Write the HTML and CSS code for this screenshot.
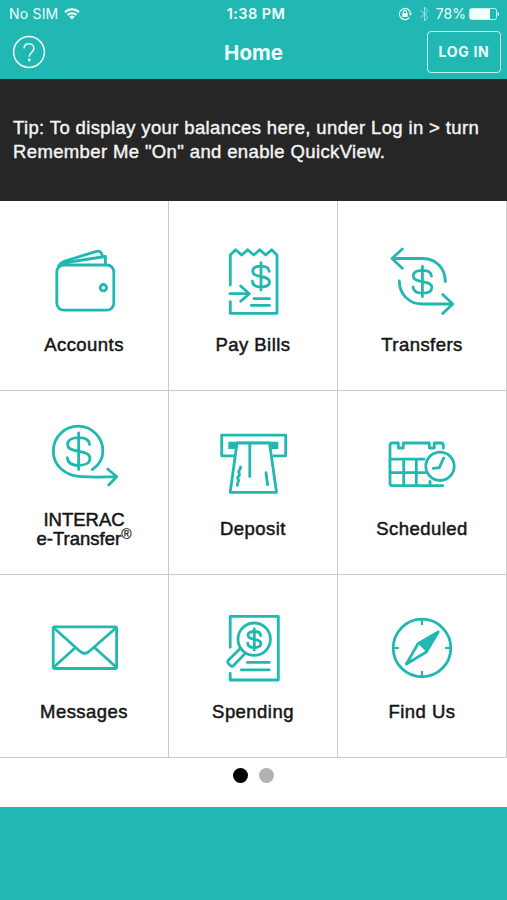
FILE: index.html
```html
<!DOCTYPE html>
<html lang="en">
<head>
    <meta charset="UTF-8">
    <meta name="viewport" content="width=device-width, initial-scale=1.0">
    <title>Home</title>
    <link rel="stylesheet" href="styles.css">
</head>
<body>
    <!-- shared dollar sign -->
    <svg class="defs" width="0" height="0">
        <symbol id="dollar" viewBox="-14 -16 28 32" overflow="visible">
            <path d="M0-13.7V13.7M8.2-5C8-8.5 5-10.2 0-10.2S-8.3-8.3-8.3-5.2S-6-1 0 .1S8.5 2.3 8.5 5.4S5.5 10.6 0 10.6S-8.3 8.6-8.5 4.8"/>
        </symbol>
    </svg>

    <div class="app">
        <header class="header">
            <div class="status-bar">
                <div class="status-left">
                    <span>No SIM</span>
                    <svg class="wifi" width="16" height="12" viewBox="0 0 16 12">
                        <path d="M1 4.2a10 10 0 0 1 14 0M3.5 7a6.4 6.4 0 0 1 9 0"/>
                        <path class="solid" d="M8 11.6L5.2 8.8a4 4 0 0 1 5.6 0z"/>
                    </svg>
                </div>
                <div class="status-time">1:38 PM</div>
                <div class="status-right">
                    <svg class="lock" width="14" height="14" viewBox="0 0 14 14">
                        <path d="M11.3 10.6A5.6 5.6 0 1 1 12.6 7"/>
                        <path class="solid" d="M10.8 6.5h3.2l-1.6 2.3zM4.3 6.2h5.4v3.9H4.3z"/>
                        <path d="M5.4 6.4V5a1.6 1.6 0 0 1 3.2 0v1.4"/>
                    </svg>
                    <svg class="bluetooth" width="9" height="16" viewBox="0 0 9 16">
                        <path d="M.7 4.3L8 11.3L4.5 15V1L8 4.7L.7 11.7"/>
                    </svg>
                    <span>78%</span>
                    <svg class="battery" width="31" height="12" viewBox="0 0 31 12">
                        <rect x=".5" y=".5" width="27" height="11" rx="2"/>
                        <path class="solid" d="M1 1h20v10H1zM28.6 4c2 .6 2 3.4 0 4z"/>
                    </svg>
                </div>
            </div>
            <div class="nav">
                <button class="help-btn">
                    <svg width="34" height="34" viewBox="0 0 34 34">
                        <circle cx="17" cy="17" r="15.4"/>
                        <path d="M12.1 13.6c0-3 2.1-4.8 4.9-4.8s4.9 1.8 4.9 4.4c0 3.9-4.6 4.3-4.6 8.6"/>
                        <circle class="dot" cx="17.3" cy="25" r="1.4"/>
                    </svg>
                </button>
                <h1>Home</h1>
                <button class="login-btn">LOG IN</button>
            </div>
        </header>

        <section class="tip">
            <p>Tip: To display your balances here, under Log in &gt; turn<br>Remember Me "On" and enable QuickView.</p>
        </section>

        <main class="grid">
            <a class="tile">
                <svg class="icon" viewBox="0 0 80 80">
                    <rect x="12.8" y="24" width="57" height="45.2" rx="7"/>
                    <path d="M14.5 25.5C15.5 22 18 21 21 20L52.5 10.4Q57.3 9.2 58.3 15M16 24.5C22 21.5 27 20.8 32 20L61.4 15.5V24"/>
                    <circle cx="59.4" cy="46.7" r="3.2"/>
                </svg>
                <span class="label">Accounts</span>
            </a>
            <a class="tile">
                <svg class="icon" viewBox="0 0 80 80">
                    <path d="M17.3 44V14l5.3-5.2L28.7 14l6-5.2L40.7 14l6-5.2L52.7 14l6-5.2L64 14v58.3H17.3V60.7"/>
                    <path d="M17 52.7h19M27.7 45l8.6 7.7l-8.6 7.6M41 57.7h15.5M38.3 64.4h18.2"/>
                    <use href="#dollar" x="34" y="19.4" width="28" height="32"/>
                </svg>
                <span class="label">Pay Bills</span>
            </a>
            <a class="tile">
                <svg class="icon" viewBox="0 0 80 80">
                    <path d="M20.3 8L10 17.5l10.3 9.8M10.5 17.5H41C55 18 63.3 28 63.3 40.7"/>
                    <path d="M17.3 40C17.3 53 27 63 40 63h30.5M60.7 53.5L70.8 63l-10.1 9.6"/>
                    <use href="#dollar" x="25" y="22.9" width="30.8" height="35.2"/>
                </svg>
                <span class="label">Transfers</span>
            </a>
            <a class="tile tile-two-line">
                <svg class="icon" viewBox="0 0 80 80">
                    <path d="M48.3 49.5C55 45 58.9 38.5 58.9 31A24.8 24.8 0 1 0 9.3 31C9.3 46 21 55.5 37 56.7Q52 57.6 72.5 56.7M63.7 49l9 7.7l-8 8.3"/>
                    <use href="#dollar" x="16" y="9.9" width="37.3" height="42.6"/>
                </svg>
                <span class="label">INTERAC<br>e-Transfer<sup>®</sup></span>
            </a>
            <a class="tile tile-middle">
                <svg class="icon" viewBox="0 0 80 80">
                    <path d="M20 35.8H8.7V15.2h64v20.6H61"/>
                    <path class="solid" d="M15.3 21.7h50V29h-50z"/>
                    <path class="paper" d="M24 23h32.5l7 49.3H17.2z"/>
                    <path d="M36.8 24v32.5M53 52.7l1.6 12M27.5 47c.8 3-3 3-1.5 5.8s-.2 3-1.2 4.4s1.8 2.2.6 4.2s-1 2.4-1 4"/>
                </svg>
                <span class="label">Deposit</span>
            </a>
            <a class="tile tile-middle">
                <svg class="icon" viewBox="0 0 80 80">
                    <path d="M61.3 28.3V25.5Q61.3 23 58.8 23H52.3v5h-5v-5h-26v5h-5v-5H10.5Q8 23 8 25.5v37.7q0 2.5 2.5 2.5h50.2"/>
                    <path d="M8 39.2h34M8 52.6h35.3M21.7 39.2v26.5M34.3 39.2v26.5M48 61.5v4"/>
                    <circle cx="58" cy="46.3" r="14.2"/>
                    <path d="M61.7 38l-4.4 9.7l-6 .6"/>
                </svg>
                <span class="label">Scheduled</span>
            </a>
            <a class="tile tile-bottom">
                <svg class="icon" viewBox="0 0 80 80">
                    <rect x="9.2" y="20.8" width="63.4" height="41.7" rx="1.5"/>
                    <path d="M10.5 22.5l24.8 22.3q5.3 5.2 10.6 0L71.3 22.5M31 42L10.5 60.5M51 42l20.5 18.5"/>
                </svg>
                <span class="label">Messages</span>
            </a>
            <a class="tile tile-bottom">
                <svg class="icon" viewBox="0 0 80 80">
                    <path d="M17.2 41.3v-31h48.1V74H17.2v-6.7M34.3 56.4h22M28.3 63.8h28"/>
                    <circle cx="41.2" cy="33.2" r="16.2"/>
                    <path d="M27.2 42.6L15.4 54.2q-1.6 1.6 0 3.2l2 2q1.6 1.6 3.2 0L32 47.6"/>
                    <use href="#dollar" x="30.5" y="21" width="21.6" height="24.7"/>
                </svg>
                <span class="label">Spending</span>
            </a>
            <a class="tile tile-bottom">
                <svg class="icon" viewBox="0 0 80 80">
                    <circle cx="40" cy="42" r="28.8"/>
                    <path class="tick" d="M40 13v6M40 65v6M11 42h6M63 42h6"/>
                    <path class="needle" d="M56.2 26L36 37.6L24.4 58L44.3 46z"/>
                    <path class="solid" d="M56.2 26L36 37.6L44.3 46z"/>
                </svg>
                <span class="label">Find Us</span>
            </a>
        </main>

        <div class="pager">
            <span class="page-dot active"></span>
            <span class="page-dot"></span>
        </div>

        <footer class="footer"></footer>
    </div>
</body>
</html>
```

FILE: styles.css
```css
* {
    margin: 0;
    padding: 0;
    box-sizing: border-box;
}

body {
    font-family: "Liberation Sans", Arial, sans-serif;
    background: #fff;
    color: #161616;
}

.defs {
    position: absolute;
}

.app {
    display: flex;
    flex-direction: column;
    width: 507px;
    height: 900px;
    overflow: hidden;
}

/* Header */
.header {
    height: 79px;
    background: #21b8b3;
    color: #effffd;
    font-family: Inter, Roboto, sans-serif;
}

.status-bar {
    display: grid;
    grid-template-columns: 1fr auto 1fr;
    align-items: center;
    height: 27px;
    padding: 0 7px 0 9px;
    font-size: 14px;
}

.status-left,
.status-right {
    display: flex;
    align-items: center;
}

.status-left {
    gap: 6px;
    letter-spacing: 0.2px;
}

.status-right {
    justify-content: flex-end;
}

.status-time {
    padding-left: 3px;
    font-size: 14.5px;
    font-weight: 600;
    letter-spacing: 0.4px;
}

.header svg {
    fill: none;
    stroke: #effffd;
    stroke-width: 1.5;
}

.header svg .solid {
    fill: #effffd;
    stroke: none;
}

.header .wifi {
    stroke-width: 2;
}

.header .lock {
    margin-right: 8px;
    stroke-width: 1.1;
}

.header .bluetooth {
    margin-right: 7px;
    stroke-width: 1;
    opacity: 0.6;
}

.header .battery {
    margin-left: 3px;
    stroke-width: 0.8;
}

.nav {
    display: grid;
    grid-template-columns: 1fr auto 1fr;
    align-items: center;
    height: 50px;
    padding: 0 6px;
}

.nav h1 {
    font-size: 20.5px;
    font-weight: 700;
}

.nav button {
    background: none;
    border: none;
    color: inherit;
    font-family: inherit;
    cursor: pointer;
}

.help-btn {
    justify-self: start;
    height: 34px;
    margin-left: 6px;
}

.help-btn svg .dot {
    fill: #effffd;
    stroke: none;
}

.nav .login-btn {
    justify-self: end;
    width: 74px;
    height: 42px;
    padding-bottom: 1px;
    border: 1.5px solid #bff5f0;
    border-radius: 4px;
    font-size: 14px;
    font-weight: 700;
    letter-spacing: 0.7px;
}

/* Tip banner */
.tip {
    display: flex;
    align-items: center;
    height: 122px;
    padding: 0 13px;
    background: #262626;
    color: #f4f4f4;
    font-size: 18.5px;
    line-height: 24.5px;
    letter-spacing: 0.37px;
    -webkit-text-stroke: 0.4px #f4f4f4;
    white-space: nowrap;
}

/* Menu */
.grid {
    display: grid;
    grid-template-columns: repeat(3, 169px);
    grid-template-rows: 190px 184px 183px;
}

.tile {
    display: flex;
    flex-direction: column;
    align-items: center;
    justify-content: flex-end;
    padding-bottom: 34px;
    border-right: 1px solid #c9cacb;
    border-bottom: 1px solid #c9cacb;
}

.icon {
    width: 80px;
    height: 80px;
    margin-bottom: 13px;
    fill: none;
    stroke: #21b8b0;
    stroke-width: 2.8;
    stroke-linecap: round;
    stroke-linejoin: round;
}

.icon .solid {
    fill: #21b8b0;
    stroke: none;
}

.icon .paper {
    fill: #fff;
}

.icon .tick {
    stroke-linecap: butt;
    stroke-width: 2.2;
}

#dollar path {
    vector-effect: non-scaling-stroke;
}

.label {
    font-size: 18.5px;
    line-height: 22px;
    letter-spacing: 0.45px;
    text-align: center;
    -webkit-text-stroke: 0.5px #161616;
}

.tile-middle .icon {
    margin-bottom: 18px;
}

.tile-bottom .icon {
    margin-bottom: 15px;
}

.tile-two-line {
    padding-bottom: 26px;
}

.tile-two-line .icon {
    margin-bottom: 10px;
}

.tile-two-line .label {
    font-size: 18.5px;
    line-height: 19px;
    letter-spacing: 0;
}

.label sup {
    font-size: 14px;
    line-height: 0;
    vertical-align: 6px;
    -webkit-text-stroke: 0.2px #161616;
}

/* Pager */
.pager {
    display: flex;
    justify-content: center;
    gap: 11px;
    height: 49px;
    padding-top: 10px;
}

.page-dot {
    width: 15px;
    height: 15px;
    border-radius: 50%;
    background: #b2b2b2;
}

.page-dot.active {
    background: #000;
}

.footer {
    flex: 1;
    background: #21b8b3;
}
```
